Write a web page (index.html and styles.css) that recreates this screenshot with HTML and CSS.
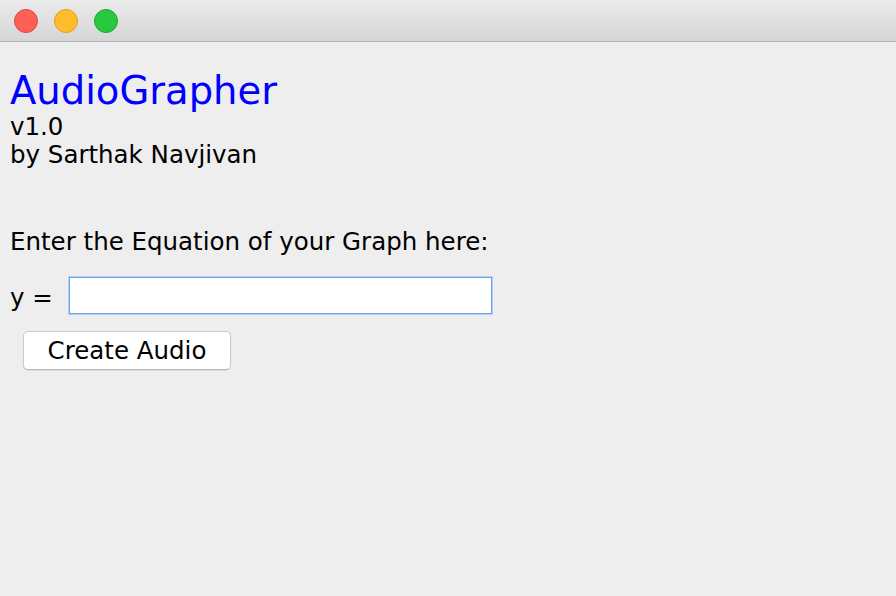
FILE: index.html
```html
<!DOCTYPE html>
<html>
<head>
<meta charset="utf-8">
<link rel="stylesheet" href="styles.css">
</head>
<body>
<div class="window">
  <div class="titlebar">
    <span class="light red"></span>
    <span class="light yellow"></span>
    <span class="light green"></span>
  </div>
  <div class="content">
    <div class="app-title">AudioGrapher</div>
    <div class="info">v1.0</div>
    <div class="info">by Sarthak Navjivan</div>
    <div class="prompt">Enter the Equation of your Graph here:</div>
    <div class="eq-row">
      <span class="eq-label">y =</span>
      <input class="eq-input" type="text">
    </div>
    <button class="create-btn">Create Audio</button>
  </div>
</div>
</body>
</html>
```

FILE: styles.css
```css
html, body {
  margin: 0;
  padding: 0;
  width: 896px;
  height: 596px;
  overflow: hidden;
  background: #eeeeee;
  font-family: "DejaVu Sans", "Liberation Sans", sans-serif;
  color: #000;
}
.window {
  display: flex;
  flex-direction: column;
  height: 596px;
}
.titlebar {
  height: 42px;
  box-sizing: border-box;
  background: linear-gradient(#ebebeb, #d5d5d5);
  border-bottom: 1px solid #b3b3b3;
  display: flex;
  align-items: center;
  padding-left: 14px;
  gap: 16px;
}
.light {
  width: 24px;
  height: 24px;
  border-radius: 50%;
  box-sizing: border-box;
}
.red { background: #fe5f57; border: 1px solid #e2463f; }
.yellow { background: #febc2e; border: 1px solid #e1a116; }
.green { background: #28c840; border: 1px solid #14ae2a; }
.content {
  padding: 27px 0 0 10px;
}
.app-title {
  font-size: 38.5px;
  color: #0000ff;
  line-height: 44px;
}
.info {
  font-size: 24.5px;
  line-height: 28px;
}
.prompt {
  font-size: 24.5px;
  line-height: 28px;
  margin-top: 59px;
}
.eq-row {
  display: flex;
  align-items: center;
  margin-top: 21px;
}
.eq-label {
  font-size: 24.5px;
  line-height: 28px;
  width: 59px;
  padding-top: 4px;
}
.eq-input {
  width: 423px;
  height: 37px;
  box-sizing: border-box;
  border: 1px solid #6f9fe6;
  box-shadow: 0 0 0 1px #b5d1f7;
  background: #fff;
  margin: 0;
  outline: none;
}
.create-btn {
  display: block;
  margin: 17px 0 0 13px;
  width: 208px;
  height: 39px;
  box-sizing: border-box;
  background: #fff;
  border: 1px solid #cbcbcb;
  border-bottom-color: #b4b4b4;
  border-radius: 5px;
  box-shadow: 0 1px 1px rgba(0,0,0,0.08);
  font-family: "DejaVu Sans", sans-serif;
  font-size: 24.5px;
  color: #000;
  padding: 0;
}
```
